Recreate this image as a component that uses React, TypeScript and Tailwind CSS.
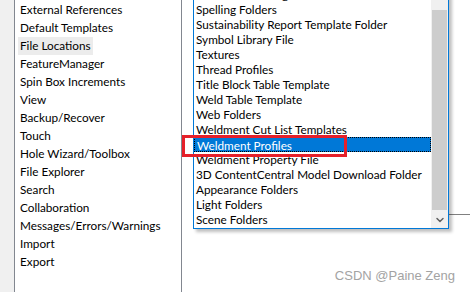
import { ChevronDown } from "lucide-react";

const categories = [
  "External References",
  "Default Templates",
  "File Locations",
  "FeatureManager",
  "Spin Box Increments",
  "View",
  "Backup/Recover",
  "Touch",
  "Hole Wizard/Toolbox",
  "File Explorer",
  "Search",
  "Collaboration",
  "Messages/Errors/Warnings",
  "Import",
  "Export",
];

const folders = [
  "Sheet Metal Gauge Tables",
  "Spelling Folders",
  "Sustainability Report Template Folder",
  "Symbol Library File",
  "Textures",
  "Thread Profiles",
  "Title Block Table Template",
  "Weld Table Template",
  "Web Folders",
  "Weldment Cut List Templates",
  "Weldment Profiles",
  "Weldment Property File",
  "3D ContentCentral Model Download Folder",
  "Appearance Folders",
  "Light Folders",
  "Scene Folders",
];

const font = { fontFamily: '"Segoe UI", Lato, "Noto Sans", Arial, sans-serif' };

export default function App() {
  return (
    <div
      className="relative flex w-[470px] h-[292px] overflow-hidden bg-white text-black text-[11.75px]"
      style={font}
    >
      {/* left gutter */}
      <div className="w-[14px] shrink-0 bg-[#f0f0f0]" />

      {/* category list */}
      <div className="w-[168px] shrink-0 border-x border-[#828790] bg-white pl-[3px] pt-[1px]">
        {categories.map((c) => (
          <div key={c} className="h-[18px] leading-[18px]">
            <span
              className={`inline-block px-[2px] ${
                c === "File Locations" ? "bg-[#ececec]" : ""
              }`}
            >
              {c}
            </span>
          </div>
        ))}
      </div>

      <div className="w-[11px] shrink-0" />

      {/* dropdown list */}
      <div className="mt-[-14px] self-start w-[256px] shrink-0 flex border border-[#0078d7] bg-white shadow-[3px_3px_3px_rgba(0,0,0,0.25)] z-10">
        <div className="flex-1 overflow-hidden">
          {folders.map((f) => {
            const selected = f === "Weldment Profiles";
            return (
              <div
                key={f}
                className={`h-[15px] leading-[16px] pl-[2px] whitespace-nowrap ${
                  selected
                    ? "bg-[#0078d7] text-white border border-dotted border-black pl-[1px] leading-[14px]"
                    : ""
                }`}
              >
                {f}
              </div>
            );
          })}
          <div className="h-px" />
        </div>

        {/* scrollbar */}
        <div className="w-[17px] flex flex-col bg-[#f0f0f0]">
          <div className="h-[17px]" />
          <div className="h-[6px]" />
          <div className="h-[200px] mx-[1px] bg-[#cdcdcd]" />
          <div className="h-px" />
          <div className="h-[17px] flex items-center justify-center text-[#606060]">
            <ChevronDown size={12} strokeWidth={3} />
          </div>
        </div>
      </div>

      {/* line behind the popup */}
      <div className="flex-1 mt-[214px] h-px bg-[#808080]" />

      {/* annotation box */}
      <div className="absolute left-[182px] top-[135px] w-[165px] h-[22px] border-[3px] border-[#e5202a] z-20" />

      {/* watermark */}
      <div
        className="absolute right-[15px] bottom-[8px] text-[13px] leading-[16px] text-[#a3a3a3] z-20"
        style={{ fontFamily: '"Liberation Sans", Arial, sans-serif' }}
      >
        CSDN @Paine Zeng
      </div>
    </div>
  );
}
